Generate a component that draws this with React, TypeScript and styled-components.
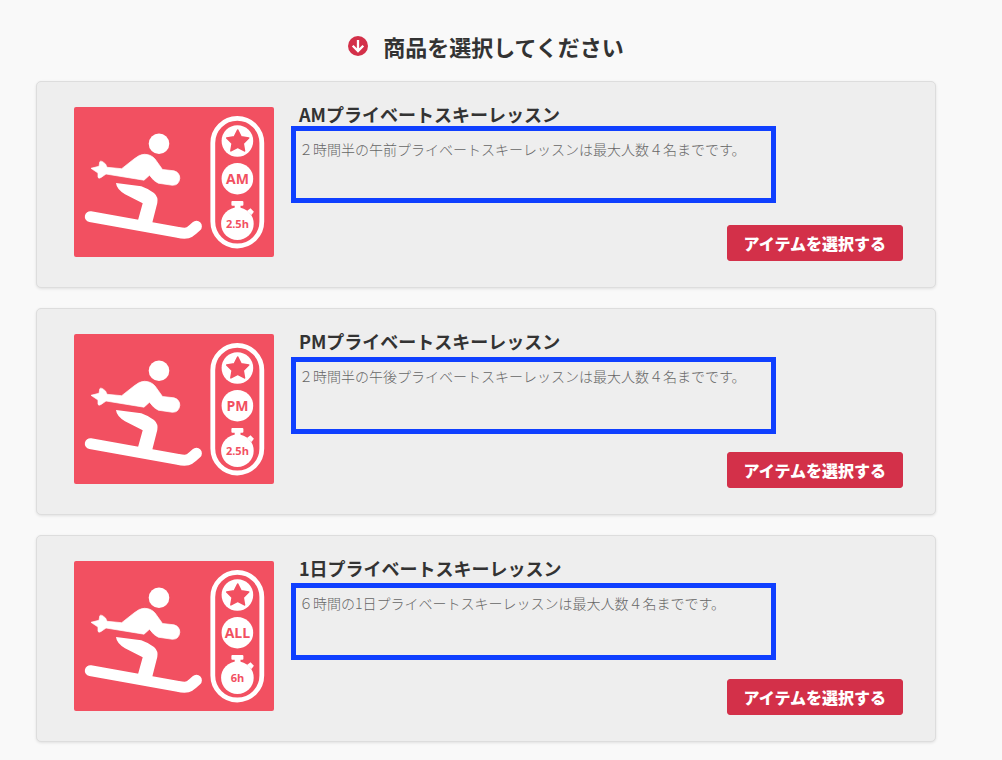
import React from "react";
import styled, { createGlobalStyle } from "styled-components";

const GlobalStyle = createGlobalStyle`
  *, *::before, *::after { box-sizing: border-box; }
  body {
    margin: 0;
    background: #f9f9f9;
    color: #333;
    font-family: "Noto Sans CJK JP", "Noto Sans", sans-serif;
  }
`;

const crimson = "#d33049";
const coral = "#f25061";

const Page = styled.main`
  padding: 29px 66px 18px 36px;
`;

const Heading = styled.h1`
  display: flex;
  align-items: center;
  justify-content: center;
  gap: 15px;
  margin: 0 0 18px;
  font-size: 22px;
  line-height: 34px;
  font-weight: 700;
`;

const ProductList = styled.ul`
  display: flex;
  flex-direction: column;
  gap: 20px;
  margin: 0;
  padding: 0;
  list-style: none;
`;

const Card = styled.li`
  position: relative;
  display: flex;
  gap: 25px;
  min-height: 207px;
  padding: 25px 32px 26px 37px;
  border: 1px solid #ddd;
  border-radius: 5px;
  background: #eee;
  box-shadow: 0 1px 3px rgba(0, 0, 0, 0.1);
`;

const Picture = styled.svg`
  flex: none;
  width: 200px;
  height: 150px;
  border-radius: 2px;
  background: ${coral};
`;

const Details = styled.div`
  flex: 1;
  display: flex;
  flex-direction: column;
  min-width: 0;
`;

const Title = styled.h2`
  margin: 0;
  padding-bottom: 10px;
  font-size: 18px;
  line-height: 14px;
  font-weight: 700;
`;

const Description = styled.p`
  margin: 0;
  padding: 8px 0;
  font-size: 14px;
  line-height: 20px;
  font-weight: 300;
  color: #666;
`;

const SelectButton = styled.button`
  align-self: flex-end;
  margin-top: auto;
  height: 36px;
  padding: 0 16px;
  border: 1px solid ${crimson};
  border-radius: 3px;
  background: ${crimson};
  color: #fff;
  font-family: inherit;
  font-size: 16px;
  line-height: 24px;
  font-weight: 900;
  cursor: pointer;
`;

/* Marker rectangle laid over a card to point out its description. */
const Highlight = styled.div<{ $top: number }>`
  position: absolute;
  top: ${(p) => p.$top}px;
  left: 254px;
  width: 485px;
  max-width: calc(100% - 254px);
  height: 77px;
  border: 5px solid #0f3fff;
  pointer-events: none;
`;

const BadgeText = styled.text`
  fill: ${coral};
  font-family: "Open Sans", "Noto Sans", sans-serif;
  font-weight: 700;
  text-anchor: middle;
`;

function DownIcon() {
  return (
    <svg width="20" height="20" viewBox="0 0 20 20" aria-hidden="true">
      <circle cx="10" cy="10" r="10" fill={crimson} />
      <path d="M10 4v11M4.700 9.700 10 15l5.300-5.300" fill="none" stroke="#fff" strokeWidth="2.300" />
    </svg>
  );
}

function LessonPicture({ period, hours }: { period: string; hours: string }) {
  return (
    <Picture viewBox="0 0 200 150" role="img" aria-label={`${period} ${hours}`}>
      <g fill="#fff">
        <circle cx="85" cy="36.8" r="10.3" />
        <path
          d="M47.700 61.700 60 52Q65.500 47.300 70.300 47.300Q77 47.300 81 52L88.500 62.500L100 63.800Q105.800 65.500 105.800 71.300Q105 78.300 98.500 78.300L84.300 76.200Q80 74.500 75.500 68.200L70 73.200 32 67 27 70.500Q24.500 72 24 70.300L24 66 17 61.300 25 59.300 25.800 54.800Q27 52.800 31.500 57L33 60.300Z"
          stroke="#fff"
          strokeWidth="0.700"
          strokeLinejoin="round"
        />
        <path d="M42 76 67.300 79.300Q75 82 80 86Q84.500 90 83.300 96L77.700 118 63.500 115 68.700 96.300 51 87.300Q42.500 82 42 76Z" />
        <path d="M16.300 109.700 104 125.300Q112 127.200 115.500 125Q118.500 123 122.400 119.300" fill="none" stroke="#fff" strokeWidth="11" strokeLinecap="round" strokeLinejoin="round" />
        <circle cx="163.400" cy="34" r="15.800" />
        <circle cx="163.400" cy="71.700" r="15.800" />
        <circle cx="163.400" cy="116.700" r="16.300" />
        <rect x="157.400" y="94" width="12" height="4.700" rx="1" />
        <path d="M160.700 97h5.800v5h-5.800z" />
        <path d="m173 104 3.500-2.800 3.400 3.500-2.400 3.300z" />
      </g>
      <rect x="138.800" y="11.400" width="49" height="127.600" rx="24.500" fill="none" stroke="#fff" strokeWidth="4.800" />
      <path
        d="m163.700 23 3.400 6.900 7.600 1.100-5.500 5.400 1.300 7.500-6.800-3.600-6.800 3.600 1.300-7.500-5.500-5.400 7.600-1.100z"
        fill={coral}
        stroke={coral}
        strokeWidth="1.600"
        strokeLinejoin="round"
      />
      <BadgeText x="163.400" y="77" fontSize="14">{period}</BadgeText>
      <BadgeText x="163.400" y="121" fontSize="11">{hours}</BadgeText>
    </Picture>
  );
}

const products = [
  {
    title: "AMプライベートスキーレッスン",
    description: "２時間半の午前プライベートスキーレッスンは最大人数４名までです。",
    period: "AM",
    hours: "2.5h",
    highlightTop: 44,
  },
  {
    title: "PMプライベートスキーレッスン",
    description: "２時間半の午後プライベートスキーレッスンは最大人数４名までです。",
    period: "PM",
    hours: "2.5h",
    highlightTop: 48,
  },
  {
    title: "1日プライベートスキーレッスン",
    description: "６時間の1日プライベートスキーレッスンは最大人数４名までです。",
    period: "ALL",
    hours: "6h",
    highlightTop: 47,
  },
];

export default function App() {
  return (
    <>
      <GlobalStyle />
      <Page>
        <Heading>
          <DownIcon />
          商品を選択してください
        </Heading>
        <ProductList>
          {products.map((product) => (
            <Card key={product.title}>
              <LessonPicture period={product.period} hours={product.hours} />
              <Details>
                <Title>{product.title}</Title>
                <Description>{product.description}</Description>
                <SelectButton type="button">アイテムを選択する</SelectButton>
              </Details>
              <Highlight $top={product.highlightTop} />
            </Card>
          ))}
        </ProductList>
      </Page>
    </>
  );
}
